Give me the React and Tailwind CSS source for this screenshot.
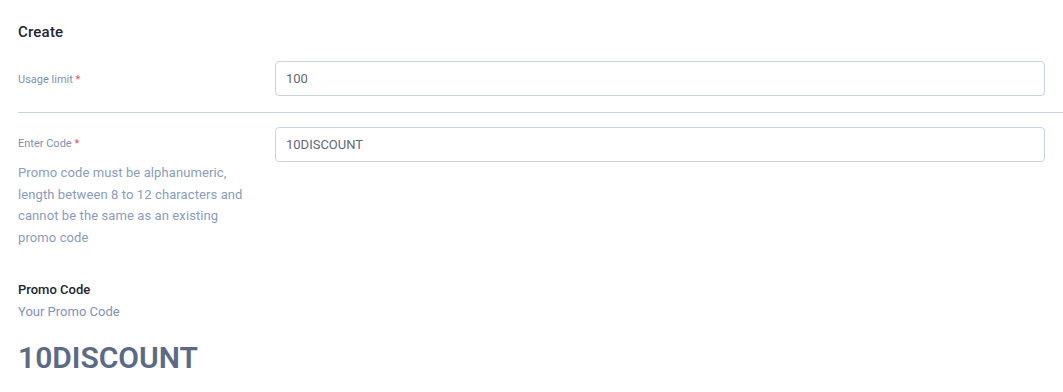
export default function App() {
  return (
    <div className="min-h-screen w-full bg-white font-['Roboto',sans-serif]">
      <div className="pt-[22px] pl-[18px]">
        <h2 className="text-[15px] leading-5 font-medium text-[#1c2436] tracking-[0.2px]">Create</h2>

        {/* Usage limit */}
        <div className="mt-[19px] pr-[18px] flex">
          <div className="w-[257px] shrink-0 pt-[12px]">
            <label className="block text-[11px] leading-[14px] text-[#7f8fae]">
              Usage limit <span className="text-[#e0506a]">*</span>
            </label>
          </div>
          <input
            readOnly
            value="100"
            className="flex-1 h-[35px] rounded-[4px] border border-[#c8d3e3] px-[10px] text-[13px] text-[#5f6879] outline-none"
          />
        </div>

        <div className="mt-[16px] border-t border-[#c8d3e3]" />

        {/* Enter code */}
        <div className="mt-[14px] pr-[18px] flex">
          <div className="w-[257px] shrink-0 pt-[10px]">
            <label className="block text-[11px] leading-[14px] text-[#7f8fae]">
              Enter Code <span className="text-[#e0506a]">*</span>
            </label>
            <p className="mt-[11px] w-[235px] text-[13px] leading-[21.5px] tracking-[0.1px] text-[#8a9cc0]">
              Promo code must be alphanumeric, length between 8 to 12 characters and cannot be the same as an existing promo code
            </p>
          </div>
          <input
            readOnly
            value="10DISCOUNT"
            className="flex-1 h-[35px] rounded-[4px] border border-[#c8d3e3] px-[10px] text-[13px] text-[#5f6879] outline-none"
          />
        </div>

        {/* Promo code preview */}
        <div className="mt-[33px]">
          <div className="text-[13px] leading-[18px] font-medium text-[#1c2436]">Promo Code</div>
          <div className="mt-[4px] text-[13px] leading-[18px] text-[#7f93bb]">Your Promo Code</div>
          <div className="mt-[19px] text-[30px] leading-[36px] font-semibold text-[#5b6b85]">10DISCOUNT</div>
        </div>
      </div>
    </div>
  );
}
